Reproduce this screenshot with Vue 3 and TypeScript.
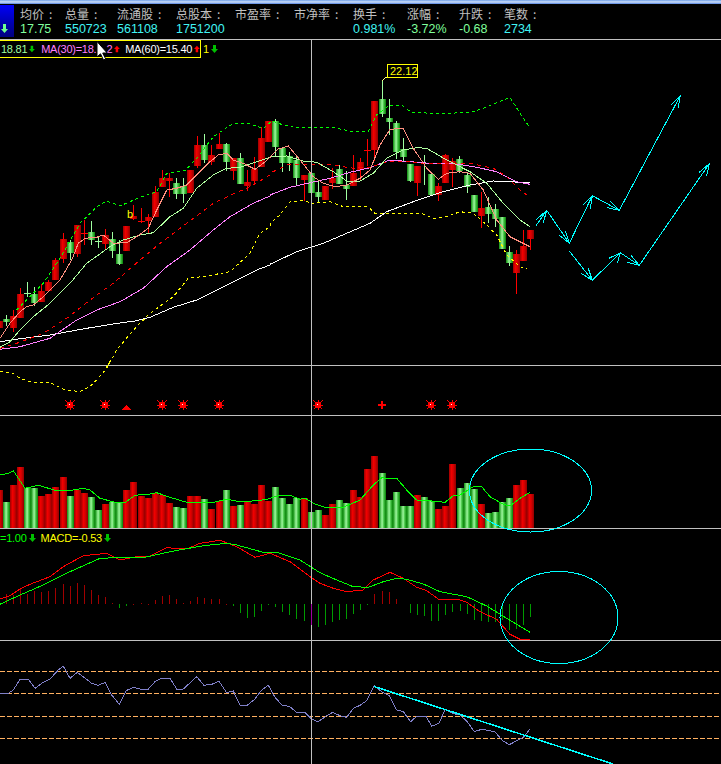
<script setup lang="ts">
type Pt = [number, number]
type Offset = { x: number; y: number }
type Tone = 'r' | 'g'

const Z3: Offset = { x: 0, y: 120 }
const Z4: Offset = { x: 270, y: 80 }
const Z5: Offset = { x: 0, y: 360 }
const Z6: Offset = { x: 300, y: 360 }
const Z7: Offset = { x: 0, y: 525 }
const Z8: Offset = { x: 320, y: 525 }

const pts = (o: Offset, list: number[][]): string =>
  list.map(([x, y]) => `${(o.x + x / 3).toFixed(1)},${(o.y + y / 3).toFixed(1)}`).join(' ')

const stats = [
  { label: '均价', value: '17.75', tone: 'soft' },
  { label: '总量', value: '550723', tone: 'cyan' },
  { label: '流通股', value: '561108', tone: 'cyan' },
  { label: '总股本', value: '1751200', tone: 'cyan' },
  { label: '市盈率', value: '', tone: 'cyan' },
  { label: '市净率', value: '', tone: 'cyan' },
  { label: '换手', value: '0.981%', tone: 'cyan' },
  { label: '涨幅', value: '-3.72%', tone: 'soft' },
  { label: '升跌', value: '-0.68', tone: 'soft' },
  { label: '笔数', value: '2734', tone: 'cyan' }
]

const candleSrc: [Offset, [number, number, number, number, number, Tone][]][] = [
  [Z3, [
    [-12, 603, 624, 603, 624, 'r'], [9, 597, 606, 585, 618, 'g'], [30, 588, 624, 570, 636, 'r'],
    [51, 522, 594, 504, 594, 'r'], [72, 519, 522, 486, 531, 'g'], [93, 522, 549, 501, 558, 'g'],
    [114, 513, 546, 492, 546, 'r'], [135, 486, 513, 480, 513, 'r'], [156, 420, 480, 414, 480, 'r'],
    [180, 357, 417, 339, 429, 'r'], [201, 366, 399, 360, 420, 'g'], [222, 315, 402, 315, 411, 'r'],
    [243, 339, 342, 300, 375, 'r'], [264, 336, 360, 303, 375, 'g'], [285, 363, 366, 348, 384, 'g'],
    [306, 345, 372, 327, 387, 'r'], [327, 357, 393, 336, 414, 'g'], [348, 402, 432, 360, 435, 'g'],
    [369, 318, 393, 318, 393, 'r'], [390, 288, 297, 255, 300, 'r'], [414, 303, 306, 264, 309, 'r'],
    [435, 291, 303, 282, 339, 'r'], [456, 216, 291, 198, 291, 'r'], [477, 174, 201, 150, 201, 'r'],
    [498, 174, 183, 160, 231, 'r'], [519, 189, 222, 174, 237, 'g'], [540, 198, 222, 174, 249, 'g'],
    [561, 150, 219, 150, 219, 'r'], [582, 75, 138, 48, 144, 'r'], [603, 75, 120, 42, 129, 'g'],
    [624, 105, 126, 75, 135, 'r'], [648, 72, 87, 39, 87, 'r'], [669, 72, 126, 69, 154, 'g'],
    [690, 114, 153, 114, 180, 'r'], [711, 114, 192, 99, 192, 'g'], [732, 186, 198, 150, 213, 'r'],
    [753, 147, 183, 111, 189, 'r'], [774, 54, 141, 21, 141, 'r'], [795, 2, 66, 2, 66, 'r']
  ]],
  [Z4, [
    [6, 123, 201, 118, 228, 'g'], [27, 204, 249, 201, 276, 'g'], [48, 228, 249, 216, 273, 'g'],
    [69, 240, 294, 228, 318, 'g'], [93, 285, 300, 285, 363, 'r'], [114, 279, 339, 246, 339, 'g'],
    [135, 336, 351, 303, 366, 'g'], [156, 318, 360, 318, 360, 'r'], [177, 294, 309, 264, 327, 'r'],
    [198, 267, 312, 255, 312, 'g'], [219, 315, 327, 273, 360, 'g'], [240, 279, 318, 225, 318, 'r'],
    [261, 246, 270, 234, 303, 'r'], [282, 210, 213, 177, 258, 'r'], [303, 63, 210, 63, 243, 'r'],
    [327, 57, 102, 3, 111, 'g'], [348, 114, 126, 57, 165, 'g'], [369, 129, 216, 123, 237, 'g'],
    [390, 207, 231, 174, 246, 'g'], [411, 252, 303, 252, 306, 'g'], [432, 258, 309, 258, 348, 'r'],
    [453, 249, 252, 225, 315, 'g'], [474, 282, 345, 282, 348, 'g'], [495, 318, 345, 309, 363, 'r'],
    [516, 225, 309, 222, 309, 'r'], [537, 243, 270, 234, 321, 'r'], [558, 237, 273, 228, 279, 'g'],
    [582, 285, 321, 279, 339, 'g'], [603, 345, 396, 345, 396, 'g'], [624, 384, 408, 336, 444, 'r'],
    [645, 381, 402, 351, 429, 'g'], [666, 387, 417, 372, 441, 'g'], [687, 411, 507, 411, 507, 'g'],
    [708, 516, 549, 498, 558, 'g'], [729, 522, 579, 510, 642, 'r'], [750, 498, 543, 450, 543, 'r'],
    [771, 450, 477, 450, 510, 'r']
  ]]
]

const candles = candleSrc.flatMap(([o, rows]) =>
  rows.map(([x, top, bottom, wickTop, wickBottom, tone]) => ({
    x: Math.round(o.x + x / 3),
    y: Math.round(o.y + top / 3),
    h: Math.max(1, Math.round((bottom - top) / 3)),
    wy: Math.round(o.y + wickTop / 3),
    wh: Math.round((wickBottom - wickTop) / 3),
    tone
  }))
)

const volSrc: [Offset, [number, number, Tone][]][] = [
  [Z5, [
    [-12, 390, 'r'], [9, 426, 'g'], [30, 375, 'r'], [51, 321, 'r'], [72, 384, 'g'], [93, 384, 'g'],
    [114, 408, 'r'], [135, 402, 'r'], [156, 381, 'r'], [180, 351, 'r'], [201, 408, 'g'], [222, 390, 'r'],
    [243, 399, 'r'], [264, 411, 'g'], [285, 450, 'g'], [306, 432, 'r'], [327, 426, 'g'], [348, 429, 'g'],
    [369, 390, 'r'], [390, 366, 'r'], [414, 408, 'r'], [435, 414, 'r'], [456, 399, 'r'], [477, 405, 'r'],
    [498, 429, 'r'], [519, 441, 'g'], [540, 444, 'g'], [561, 408, 'r'], [582, 408, 'r'], [603, 417, 'g'],
    [624, 447, 'r'], [648, 423, 'r'], [669, 390, 'g'], [690, 438, 'r'], [711, 435, 'g'], [732, 423, 'r'],
    [753, 432, 'r'], [774, 375, 'r'], [795, 423, 'r'], [816, 381, 'g'], [837, 414, 'g'], [858, 432, 'g'],
    [879, 414, 'g']
  ]],
  [Z6, [
    [3, 414, 'r'], [24, 456, 'g'], [45, 450, 'g'], [66, 465, 'r'], [87, 432, 'r'], [108, 420, 'g'],
    [129, 429, 'g'], [150, 390, 'r'], [171, 411, 'r'], [192, 327, 'r'], [213, 288, 'r'], [237, 339, 'g'],
    [258, 420, 'g'], [279, 396, 'g'], [300, 438, 'g'], [321, 438, 'g'], [342, 405, 'r'], [363, 411, 'g'],
    [384, 423, 'g'], [405, 447, 'r'], [426, 438, 'r'], [447, 312, 'r'], [471, 384, 'g'], [492, 369, 'g'],
    [513, 387, 'g'], [534, 432, 'r'], [555, 459, 'g'], [576, 456, 'g'], [597, 426, 'g'], [618, 414, 'g'],
    [639, 375, 'r'], [660, 360, 'r'], [681, 402, 'r']
  ]]
]

const volumes = volSrc.flatMap(([o, rows]) =>
  rows.map(([x, top, tone]) => {
    const y = Math.round(o.y + top / 3)
    return { x: Math.round(o.x + x / 3), y, h: 528 - y, tone }
  })
)

const macdSrc: [Offset, number[][]][] = [
  [Z7, [
    [19, 207], [40, 210], [61, 192], [82, 207], [103, 197], [124, 201], [145, 197], [166, 189], [190, 177],
    [211, 183], [232, 174], [253, 180], [274, 195], [295, 210], [316, 216], [337, 234], [358, 250], [379, 243],
    [400, 236], [424, 234], [445, 237], [466, 225], [487, 212], [508, 210], [529, 222], [550, 234], [571, 228],
    [592, 216], [613, 220], [634, 222], [658, 222], [679, 237], [700, 243], [721, 265], [742, 279], [763, 276],
    [784, 258], [805, 241], [826, 246], [847, 261], [868, 270], [889, 282], [913, 288], [955, 306]
  ]],
  [Z8, [
    [16, 300], [37, 291], [58, 285], [79, 282], [100, 267], [121, 255], [142, 240], [163, 207], [187, 198],
    [208, 201], [229, 222], [271, 264], [292, 270], [313, 273], [334, 288], [355, 288], [376, 270], [397, 261],
    [421, 258], [442, 267], [463, 285], [484, 288], [505, 291], [526, 291], [547, 285], [568, 315], [589, 312],
    [610, 300], [631, 276]
  ]]
]

const macdBars = macdSrc.flatMap(([o, rows]) =>
  rows.map(([x, v]) => {
    const zero = 604
    const tip = Math.round(o.y + v / 3)
    return {
      x: Math.floor(o.x + x / 3),
      y: Math.min(zero, tip),
      h: Math.max(1, Math.abs(tip - zero)),
      tone: tip > zero ? 'g' : 'r'
    }
  })
)

const lines = {
  ma5: [
    pts(Z3, [[0,655],[30,610],[60,575],[80,560],[100,555],[130,530],[180,480],[215,420],[235,370],[255,355],[290,352],[310,345],[340,370],[380,368],[410,350],[445,325],[470,270],[500,210],[530,205],[560,195],[590,165],[630,125],[655,105],[680,100],[700,120],[730,130],[765,148],[790,130],[810,112]]),
    pts(Z4, [[0,230],[25,207],[55,198],[90,240],[130,290],[160,310],[195,320],[230,315],[270,295],[300,270],[330,195],[360,148],[400,145],[430,205],[470,265],[505,298],[530,280],[570,275],[600,280],[640,330],[680,420],[720,470],[780,500]])
  ].join(' '),
  ma10: [
    pts(Z3, [[0,682],[30,665],[60,630],[100,590],[150,550],[210,490],[260,430],[330,380],[370,360],[420,345],[460,338],[510,290],[550,265],[590,205],[640,165],[680,145],[720,142],[770,125],[810,112]]),
    pts(Z4, [[0,230],[50,228],[100,243],[140,247],[190,275],[230,303],[270,303],[310,280],[350,235],[400,210],[440,203],[470,205],[530,240],[600,275],[650,310],[700,370],[750,420],[780,440]])
  ].join(' '),
  ma20: [
    pts(Z3, [[0,685],[50,670],[130,640],[200,595],[270,540],[340,490],[420,420],[480,370],[560,310],[640,250],[700,222],[750,200],[810,165]]),
    pts(Z4, [[0,280],[50,255],[120,253],[190,255],[250,265],[300,262],[350,245],[400,243],[450,250],[510,252],[600,250],[670,265],[710,290],[750,330],[780,352]])
  ].join(' '),
  ma30: [
    pts(Z3, [[0,688],[60,680],[150,655],[230,600],[290,570],[360,545],[430,505],[500,440],[570,390],[640,330],[690,290],[760,250],[810,228]]),
    pts(Z4, [[0,345],[60,322],[120,308],[180,295],[240,277],[300,263],[360,240],[420,245],[480,250],[560,252],[620,262],[680,275],[740,305],[780,313]])
  ].join(' '),
  ma60: [
    pts(Z3, [[0,665],[70,655],[150,645],[260,625],[340,612],[410,602],[450,592],[520,562],[590,540],[700,485],[770,450],[810,435]]),
    pts(Z4, [[0,553],[80,515],[160,490],[300,430],[350,395],[430,365],[520,335],[600,315],[670,303],[780,308]])
  ].join(' '),
  upper: [
    pts(Z3, [[50,570],[60,560],[130,490],[180,415],[240,310],[290,260],[320,243],[360,258],[420,232],[470,215],[500,160],[555,152],[590,115],[640,50],[700,10],[750,12],[790,25]]),
    pts(Z4, [[6,123],[40,135],[80,143],[190,143],[250,155],[295,155],[320,105],[360,75],[395,75],[425,98],[510,100],[600,98],[640,85],[720,52],[750,100],[780,143]])
  ].join(' '),
  lower: [
    pts(Z5, [[0,35],[40,40],[60,55],[95,67],[150,68],[190,88],[240,95],[270,80],[310,38],[332,0]]),
    pts(Z3, [[320,745],[350,690],[400,630],[450,580],[520,530],[565,475],[620,468],[690,455],[750,400],[780,340],[810,320]]),
    pts(Z4, [[0,430],[30,405],[60,365],[100,362],[130,370],[180,365],[220,380],[295,380],[315,400],[460,402],[490,415],[530,410],[570,395],[610,400],[650,435],[680,465],[710,525],[750,560],[770,565]])
  ].join(' '),
  volAvg: [
    pts(Z5, [[0,345],[25,340],[40,332],[55,355],[75,385],[115,376],[170,392],[220,390],[250,385],[270,390],[300,415],[350,428],[375,428],[405,406],[450,402],[470,398],[510,412],[560,427],[640,427],[680,418],[720,425],[770,422],[800,418],[840,406],[870,406],[900,418]]),
    pts(Z6, [[15,414],[40,430],[75,442],[130,442],[180,420],[220,375],[245,353],[270,357],[290,355],[320,390],[350,420],[385,422],[435,427],[460,407],[480,405],[520,380],[545,380],[570,410],[610,433],[630,438],[660,415],[690,397]])
  ].join(' '),
  dif: [
    pts(Z7, [[0,222],[30,212],[60,192],[90,178],[150,155],[190,125],[250,92],[320,85],[360,105],[410,95],[450,93],[500,68],[560,72],[600,55],[660,46],[710,65],[765,97],[810,85],[870,110],[930,155],[960,175]]),
    pts(Z8, [[40,190],[80,200],[130,195],[160,165],[210,142],[250,160],[290,187],[320,197],[355,222],[410,222],[440,232],[480,260],[530,283],[570,328],[600,343],[630,343]])
  ].join(' '),
  dea: [
    pts(Z7, [[0,238],[60,210],[130,180],[210,140],[300,100],[350,98],[430,98],[510,80],[610,62],[680,55],[710,60],[790,82],[830,82],[900,105],[960,143]]),
    pts(Z8, [[50,165],[100,185],[145,187],[190,170],[230,160],[260,163],[310,177],[360,200],[440,215],[500,243],[560,280],[630,322]])
  ].join(' '),
  rsi: [
    pts(Z7, [[0,505],[25,505],[40,495],[60,463],[85,463],[105,490],[125,475],[150,462],[175,435],[190,424],[210,460],[232,442],[275,475],[295,481],[316,472],[335,510],[358,538],[378,497],[400,487],[420,492],[445,492],[465,470],[485,460],[510,460],[530,492],[550,492],[590,455],[612,481],[635,478],[657,469],[680,503],[700,498],[720,541],[742,541],[765,522],[785,495],[805,481],[825,517],[847,541],[868,544],[890,562],[915,562],[935,583],[955,590]]),
    pts(Z8, [[20,572],[38,562],[60,572],[80,577],[100,550],[120,541],[140,527],[163,482],[185,500],[208,512],[230,555],[250,560],[272,590],[290,574],[318,574],[335,604],[358,594],[375,553],[397,565],[420,570],[442,590],[463,620],[485,613],[525,620],[545,645],[568,659],[590,647],[610,637],[630,612]])
  ].join(' ')
}

const A: Offset = { x: 525, y: 85 }
const sketch = [
  pts(A, [[33,422],[65,376],[133,475],[202,332],[283,376],[466,32]]),
  pts(A, [[133,498],[202,586],[286,503],[343,541],[553,236]])
]
const barbs = [
  [[33,405],[65,376],[55,413]], [[103,451],[133,475],[121,438]], [[175,360],[202,332],[196,372]],
  [[247,368],[283,376],[256,349]], [[438,60],[466,32],[460,68]], [[168,565],[202,586],[190,550]],
  [[252,520],[286,503],[277,535]], [[306,532],[343,541],[318,511]], [[523,262],[553,236],[545,272]]
].map((b) => pts(A, b))

const starXs = [70, 105, 162, 183, 219, 318, 431, 452]
const rays: Pt[] = [[0, -5], [4.5, -4.5], [5, 0], [4.5, 4.5], [0, 5], [-4.5, 4.5], [-5, 0], [-4.5, -4.5]]
const levels = [671, 693, 716, 738]
const rules = [365, 415, 528, 640]
</script>

<template>
  <div class="terminal">
    <header class="top">
      <div class="strip"></div>
      <div class="row">
        <div class="flag">
          <svg width="7" height="9" viewBox="0 0 7 9" class="flag-arrow">
            <path d="M2 0h3v5h2l-3.500 4L0 5h2z" fill="#70ff90" />
          </svg>
        </div>
        <div class="stats">
          <div v-for="s in stats" :key="s.label" class="stat">
            <span class="label">{{ s.label }}<span class="colon">:</span></span>
            <span class="value" :class="s.tone">{{ s.value }}</span>
          </div>
        </div>
      </div>
    </header>

    <main class="board">
      <svg class="chart" width="721" height="724" viewBox="0 40 721 724" shape-rendering="crispEdges">
        <defs>
          <linearGradient id="fillR">
            <stop offset="0" stop-color="#9c0000" />
            <stop offset="0.35" stop-color="#f00000" />
            <stop offset="0.6" stop-color="#d80000" />
            <stop offset="1" stop-color="#900000" />
          </linearGradient>
          <linearGradient id="fillG">
            <stop offset="0" stop-color="#0c8c0c" />
            <stop offset="0.45" stop-color="#a0f8a0" />
            <stop offset="0.7" stop-color="#40c040" />
            <stop offset="1" stop-color="#088008" />
          </linearGradient>
        </defs>

        <rect v-for="y in rules" :key="y" x="0" :y="y" width="721" height="1" fill="#c0c0c0" />

        <g v-for="(c, i) in candles" :key="'c' + i">
          <rect :x="c.x + 3" :y="c.wy" width="1" :height="c.wh" :fill="c.tone === 'r' ? '#ff0000' : '#a0ffa0'" />
          <rect
            :x="c.x"
            :y="c.y"
            width="7"
            :height="c.h"
            :fill="c.h < 2 ? (c.tone === 'r' ? '#ff0000' : '#a0ffa0') : c.tone === 'r' ? 'url(#fillR)' : 'url(#fillG)'"
          />
        </g>

        <polyline :points="lines.ma60" class="ln" stroke="#ffffff" />
        <polyline :points="lines.ma30" class="ln" stroke="#ff80ff" />
        <polyline :points="lines.ma20" class="ln" stroke="#ff0000" stroke-dasharray="4 4" />
        <polyline :points="lines.ma10" class="ln" stroke="#b0ffa0" />
        <polyline :points="lines.ma5" class="ln" stroke="#ff9080" />
        <polyline :points="lines.upper" class="ln" stroke="#00ff00" stroke-dasharray="3 3" />
        <polyline :points="lines.lower" class="ln" stroke="#ffff00" stroke-dasharray="3 3" />

        <polyline :points="sketch[0]" class="ln" stroke="#00ffff" />
        <polyline :points="sketch[1]" class="ln" stroke="#00ffff" />
        <polyline v-for="(b, i) in barbs" :key="'b' + i" :points="b" class="ln" stroke="#00ffff" />

        <path d="M382.5 81q1-3 5-4" class="ln" stroke="#ffff80" />
        <rect x="387.5" y="64.5" width="30" height="13" fill="#000" stroke="#ffff00" />
        <text x="390" y="75" class="tag">22.12</text>
        <text x="127" y="218" class="mark">b</text>

        <g v-for="x in starXs" :key="'s' + x" :transform="`translate(${x} 405)`">
          <line v-for="(r, i) in rays" :key="i" x1="0" y1="0" :x2="r[0]" :y2="r[1]" stroke="#ff0000" />
          <circle r="3.500" fill="#ff0000" />
          <rect x="-1" y="-1" width="1" height="1" fill="#fff" />
        </g>
        <path d="M122 410l4.500-5 4.500 5z" fill="#ff0000" />
        <path d="M381 401h2v3h3v2h-3v3h-2v-3h-3v-2h3z" fill="#ff0000" />

        <rect
          v-for="(v, i) in volumes"
          :key="'v' + i"
          :x="v.x"
          :y="v.y"
          width="7"
          :height="v.h"
          :fill="v.tone === 'r' ? 'url(#fillR)' : 'url(#fillG)'"
        />
        <polyline :points="lines.volAvg" class="ln" stroke="#00ff00" />

        <rect
          v-for="(b, i) in macdBars"
          :key="'m' + i"
          :x="b.x"
          :y="b.y"
          width="1"
          :height="b.h"
          :fill="b.tone === 'r' ? '#a00000' : '#009a00'"
        />
        <polyline :points="lines.dif" class="ln" stroke="#ff0000" />
        <polyline :points="lines.dea" class="ln" stroke="#00ff00" />

        <line v-for="y in levels" :key="'l' + y" x1="0" :y1="y + 0.5" x2="721" :y2="y + 0.5" stroke="#ffb060" stroke-dasharray="5 2" />
        <polyline :points="lines.rsi" class="ln" stroke="#8080c8" />
        <line x1="374" y1="686.500" x2="613" y2="764" stroke="#00ffff" stroke-width="1.500" />

        <ellipse cx="530.500" cy="490.500" rx="61" ry="41.500" class="ln" stroke="#00ffff" />
        <ellipse cx="559" cy="617.500" rx="59" ry="46" class="ln" stroke="#00ffff" />

        <rect x="311" y="40" width="1" height="724" fill="#c0c0c0" />
        <rect x="311" y="604" width="1" height="21" fill="#a000a0" />
      </svg>

      <div class="legend legend-ma">
        <div class="legend-box">
          <span class="t-ma10">18.81</span>
          <svg class="arrow" width="7" height="8" viewBox="0 0 7 8"><path d="M2 0h3v4h2l-3.500 4L0 4h2z" fill="#00c000" /></svg>
          <span class="t-ma30 gap">MA(30)=18.</span>
          <span class="t-ma30 tail">2</span>
          <svg class="arrow" width="7" height="8" viewBox="0 0 7 8"><path d="M2 8h3V4h2L3.500 0 0 4h2z" fill="#ff0000" /></svg>
          <span class="t-ma60 gap-s">MA(60)=15.40</span>
          <svg class="arrow" width="7" height="8" viewBox="0 0 7 8"><path d="M2 8h3V4h2L3.500 0 0 4h2z" fill="#ff0000" /></svg>
        </div>
        <span class="t-rest">1</span>
        <svg class="arrow" width="7" height="8" viewBox="0 0 7 8"><path d="M2 0h3v4h2l-3.500 4L0 4h2z" fill="#00c000" /></svg>
      </div>

      <div class="legend legend-macd">
        <span class="t-dea">=1.00</span>
        <svg class="arrow" width="7" height="8" viewBox="0 0 7 8"><path d="M2 0h3v4h2l-3.500 4L0 4h2z" fill="#00c000" /></svg>
        <span class="t-macd">MACD=-0.53</span>
        <svg class="arrow" width="7" height="8" viewBox="0 0 7 8"><path d="M2 0h3v4h2l-3.500 4L0 4h2z" fill="#00c000" /></svg>
      </div>

      <svg class="cursor" width="12" height="20" viewBox="0 0 12 20">
        <path d="M1 .5v15.500l3.500-3.200 3 6.200 2.200-1-3-6h4.500z" fill="#fff" stroke="#000" />
      </svg>
    </main>
  </div>
</template>

<style scoped>
.terminal {
  width: 721px;
  height: 764px;
  overflow: hidden;
  background: #000;
  font-family: "Liberation Sans", sans-serif;
}
.top {
  height: 39px;
  border-bottom: 1px solid #c0c0c0;
  box-sizing: content-box;
}
.strip {
  height: 4px;
  background: linear-gradient(#6f9fe8, #d0e0f8 50%, #4f80e0);
}
.row {
  display: flex;
  height: 35px;
}
.flag {
  width: 14px;
  height: 32px;
  margin-top: 1px;
  background: linear-gradient(#0000f8, #0000a0 70%, #000080);
  box-sizing: border-box;
  padding: 19px 0 0 1px;
}
.flag-arrow {
  display: block;
}
.stats {
  margin-left: 6px;
  display: grid;
  grid-template-columns: 45px 52px 59px 59px 59px 59px 54px 52px 45px 60px;
}
.stat {
  display: flex;
  flex-direction: column;
  padding-top: 2px;
}
.label {
  height: 16px;
  line-height: 16px;
  font-size: 12px;
  color: #c0c0c0;
  font-family: "Noto Sans CJK SC", "Liberation Sans", sans-serif;
  white-space: nowrap;
}
.colon {
  margin-left: 5px;
}
.value {
  height: 15px;
  line-height: 15px;
  font-size: 12.500px;
}
.value.soft {
  color: #80ff9c;
}
.value.cyan {
  color: #40f4f4;
}
.board {
  position: relative;
  height: 724px;
}
.chart {
  display: block;
}
.ln {
  fill: none;
}
.tag {
  fill: #ffff00;
  font-size: 11px;
  font-family: "Liberation Sans", sans-serif;
}
.mark {
  fill: #ffff00;
  font-size: 11px;
  font-family: "Liberation Sans", sans-serif;
}
.legend {
  position: absolute;
  display: flex;
  align-items: center;
  font-size: 11px;
  letter-spacing: -0.25px;
  line-height: 14px;
  white-space: nowrap;
}
.legend-ma {
  left: -1px;
  top: 0;
}
.legend-box {
  display: flex;
  align-items: center;
  width: 202px;
  height: 18px;
  border: 1px solid #ffff00;
  background: #000;
  box-sizing: border-box;
  padding-left: 1px;
}
.legend-macd {
  left: 0;
  top: 491px;
}
.arrow {
  display: block;
  margin-left: 2px;
}
.gap {
  margin-left: 6px;
}
.tail {
  margin-left: 10px;
}
.gap-s {
  margin-left: 5px;
}
.t-ma10 {
  color: #a0ffa0;
}
.t-ma30 {
  color: #ff80ff;
}
.t-ma60 {
  color: #fff;
}
.t-rest,
.t-macd {
  color: #ffff00;
}
.t-rest {
  margin-left: 2px;
}
.t-dea {
  color: #00ff00;
}
.t-macd {
  margin-left: 5px;
}
.cursor {
  position: absolute;
  left: 96px;
  top: 1px;
}
</style>

<style>
html,
body {
  margin: 0;
  background: #000;
}
</style>
